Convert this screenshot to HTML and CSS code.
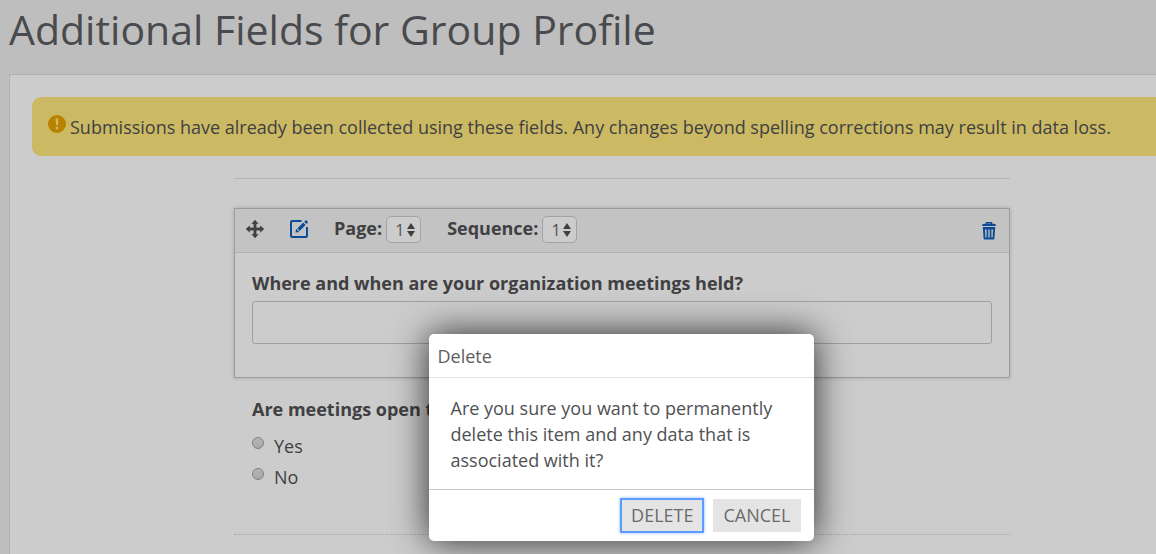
FILE: index.html
```html
<!DOCTYPE html>
<html lang="en">
<head>
    <meta charset="UTF-8">
    <meta name="viewport" content="width=device-width, initial-scale=1.0">
    <title>Additional Fields for Group Profile</title>
    <link rel="stylesheet" href="styles.css">
</head>
<body>

    <div class="page">
        <h1>Additional Fields for Group Profile</h1>

        <main class="panel">
            <div class="alert">
                <svg class="alert-icon" viewBox="0 0 17 17" aria-hidden="true">
                    <circle cx="8.5" cy="8.5" r="8.5" fill="#e8a200"/>
                    <path d="M7.2 3h2.6l-.4 6.6H7.6z M7.3 11h2.4v2.4H7.3z" fill="#ffe87d"/>
                </svg>
                <span>Submissions have already been collected using these fields. Any changes beyond spelling corrections may result in data loss.</span>
            </div>

            <form id="fields" class="fields">
                <hr>

                <section class="field selected">
                    <div class="toolbar">
                        <button type="button" class="icon-button move" aria-label="Move">
                            <svg width="18" height="18" viewBox="0 0 18 18">
                                <path d="M9 0l3.3 3.7h-2.1v4.1h4.1V5.7L18 9l-3.7 3.3v-2.1h-4.1v4.1h2.1L9 18l-3.3-3.7h2.1v-4.1H3.7v2.1L0 9l3.7-3.3v2.1h4.1V3.7H5.7z" fill="currentColor" stroke="currentColor" stroke-width=".4"/>
                            </svg>
                        </button>
                        <button type="button" class="icon-button edit" aria-label="Edit">
                            <svg width="18" height="18" viewBox="0 0 18 18">
                                <path d="M11.5 1H2.2Q1 1 1 2.2v13.600Q1 17 2.200 17h13.600q1.200 0 1.200-1.200V7" fill="none" stroke="currentColor" stroke-width="2"/>
                                <path d="M5.5 12.500l.6-3.700 3.100 3.100z M7.300 8.600l6-6 2.300 2.300-6 6z M14.200 1.700L15.400.5q.6-.5 1.200 0l1 1q.6.6 0 1.200l-1.100 1.200z" fill="currentColor"/>
                            </svg>
                        </button>
                        <label for="page">Page:</label>
                        <span class="select">
                            <select id="page"><option>1</option></select>
                            <svg width="8" height="14" viewBox="0 0 8 14" aria-hidden="true"><path d="M4 0l4 6H0z M0 8h8l-4 6z" fill="currentColor"/></svg>
                        </span>
                        <label for="sequence">Sequence:</label>
                        <span class="select">
                            <select id="sequence"><option>1</option></select>
                            <svg width="8" height="14" viewBox="0 0 8 14" aria-hidden="true"><path d="M4 0l4 6H0z M0 8h8l-4 6z" fill="currentColor"/></svg>
                        </span>
                        <button type="button" class="icon-button trash" aria-label="Delete field">
                            <svg width="14" height="18" viewBox="0 0 14 18">
                                <path d="M4.5 2V.7h5V2" fill="none" stroke="currentColor" stroke-width="1.4"/>
                                <path d="M0 4q0-2.3 2-2.3h10q2 0 2 2.3z" fill="currentColor"/>
                                <path fill-rule="evenodd" d="M.8 5h12.400l-.8 11.500q-.1 1-1 1H2.600q-.9 0-1-1z M3 7.500l.4 8h1.200v-8z M6.300 7.500v8h1.400v-8z M9.400 7.500v8h1.200l.4-8z" fill="currentColor"/>
                            </svg>
                        </button>
                    </div>
                    <div class="field-body">
                        <label for="meetings">Where and when are your organization meetings held?</label>
                        <input type="text" id="meetings">
                    </div>
                </section>

                <fieldset class="field question">
                    <legend>Are meetings open to</legend>
                    <label class="choice"><input type="radio" name="open"> Yes</label>
                    <label class="choice"><input type="radio" name="open"> No</label>
                </fieldset>
            </form>
        </main>

        <div class="overlay">
            <div class="dialog" role="dialog" aria-modal="true" aria-labelledby="dialog-title">
                <h2 id="dialog-title">Delete</h2>
                <p>Are you sure you want to permanently delete this item and any data that is associated with it?</p>
                <div class="dialog-footer">
                    <button type="button" class="button active">Delete</button>
                    <button type="button" class="button">Cancel</button>
                </div>
            </div>
        </div>
    </div>

</body>
</html>
```

FILE: styles.css
```css
* {
    box-sizing: border-box;
}

body {
    margin: 0;
    background: #eee;
    color: #505153;
    font-family: 'Open Sans', sans-serif;
    font-size: 18px;
    line-height: 26px;
}

button, input, select {
    font: inherit;
    color: inherit;
}

.page {
    position: relative;
    min-height: 100vh;
    padding-left: 9px;
    overflow: hidden;
}

h1 {
    margin: 0;
    padding-bottom: 16px;
    color: #5c5d62;
    font-size: 41px;
    font-weight: 400;
    line-height: 58px;
}

.panel {
    padding: 22px 0 19px 22px;
    border: 1px solid #dcdcdc;
    border-width: 1px 0 0 1px;
    background: #fff;
}

.alert {
    display: flex;
    gap: 4px;
    padding: 17px 16px 16px;
    border-radius: 9px 0 0 9px;
    background: #ffe87d;
}

.alert-icon {
    width: 18px;
    height: 18px;
    margin-top: 1px;
}

.fields {
    max-width: 776px;
    margin: 22px 0 0 202px;
}

hr {
    margin: 0 0 29px;
    border: 0;
    border-top: 1px solid #e0e0e0;
}

.selected {
    border: 1px solid #c4c4c4;
    box-shadow: 0 0 4px rgba(0, 0, 0, 0.2);
}

.toolbar {
    display: flex;
    align-items: center;
    height: 44px;
    padding: 0 13px 0 11px;
    border-bottom: 1px solid #dedede;
    background: #f4f4f4;
}

.toolbar label {
    margin-right: 4px;
    padding-bottom: 6px;
    font-weight: 700;
}

.icon-button {
    display: flex;
    padding: 0;
    border: 0;
    background: none;
    cursor: pointer;
}

.move, .edit {
    margin-right: 26px;
    padding-bottom: 4px;
}

.edit, .trash {
    color: #0e5fba;
}

.trash {
    margin-left: auto;
}

.select {
    display: grid;
    align-items: center;
    margin-right: 26px;
    margin-bottom: 2px;
}

.select > * {
    grid-area: 1 / 1;
}

.select svg {
    justify-self: end;
    margin-right: 6px;
    pointer-events: none;
}

select {
    width: 35px;
    height: 27px;
    padding: 0 0 0 8px;
    border: 1px solid #ccc;
    border-radius: 5px;
    background: #fff;
    color: #6a6a6a;
    font-size: 16px;
    line-height: 24px;
    appearance: none;
}

.field-body {
    padding: 17px 17px 33px;
}

.field-body label {
    display: block;
    margin-bottom: 5px;
    font-weight: 700;
}

.field-body input {
    display: block;
    width: 100%;
    height: 43px;
    padding: 0 12px;
    border: 1px solid #c8c8c8;
    border-radius: 3px;
    background: #fff;
}

.question {
    margin: 0;
    padding: 18px 18px 42px;
    border: 0;
    border-bottom: 1px dotted #ccc;
}

legend {
    float: left;
    width: 100%;
    margin-bottom: 8px;
    padding: 0;
    font-weight: 700;
}

.choice {
    display: flex;
    clear: both;
    gap: 10px;
    padding: 3px 0 2px;
}

.choice input {
    width: 12px;
    height: 12px;
    margin: 4px 0 0;
    border: 1px solid #a0a0a0;
    border-radius: 50%;
    background: linear-gradient(#e4e4e4, #d2d2d2);
    appearance: none;
}

.overlay {
    position: absolute;
    inset: 0;
    padding: 334px 0 0 86px;
    background: rgba(0, 0, 0, 0.2);
}

.dialog {
    max-width: 385px;
    margin: 0 auto;
    border-radius: 5px;
    background: #fff;
    box-shadow: 0 0 36px rgba(0, 0, 0, 0.8);
}

.dialog h2 {
    margin: 0;
    padding: 9px 9px 8px;
    border-bottom: 1px solid #e2e2e2;
    color: #5c5d62;
    font-size: 18px;
    font-weight: 400;
    line-height: 26px;
}

.dialog p {
    margin: 0;
    padding: 17px 22px 16px;
}

.dialog-footer {
    display: flex;
    justify-content: flex-end;
    gap: 10px;
    padding: 9px 13px;
    border-top: 1px solid #c8c8c8;
}

.button {
    height: 33px;
    padding: 0 10px 1px;
    border: 0;
    background: #e4e4e4;
    color: #6a6a6a;
    text-transform: uppercase;
    cursor: pointer;
}

.active {
    outline: 2px solid #5c9bff;
    outline-offset: -1px;
    box-shadow: 0 0 3px 1px #8ab6ff;
}
```
